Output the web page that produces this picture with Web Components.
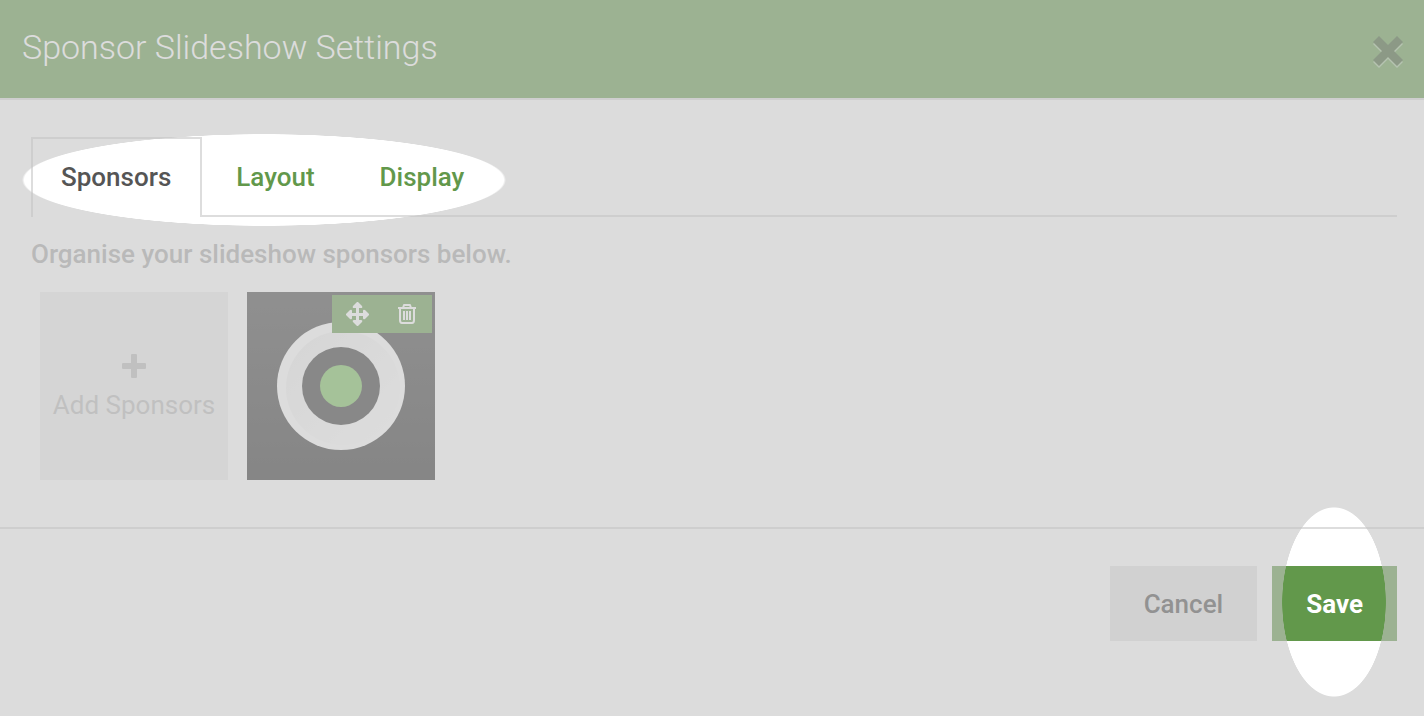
<!DOCTYPE html>
<html lang="en">
<head>
<meta charset="utf-8">
<meta name="viewport" content="width=device-width, initial-scale=1">
<title>Sponsor Slideshow Settings</title>
<style>
    :root {
        --green: #62984b;
        --line: #ddd;
    }

    body {
        margin: 0;
        background: #fff;
        color: #555;
        font-family: Roboto, "Liberation Sans", sans-serif;
        font-size: 26px;
        font-weight: 500;
        line-height: 36px;
    }
</style>
</head>
<body>
<settings-dialog heading="Sponsor Slideshow Settings">
    <settings-tabs slot="tabs" labels="Sponsors,Layout,Display"></settings-tabs>
    <p slot="intro">Organise your slideshow sponsors below.</p>
    <add-tile slot="tiles">Add Sponsors</add-tile>
    <sponsor-tile slot="tiles"></sponsor-tile>
    <action-button slot="actions">Cancel</action-button>
    <action-button slot="actions" variant="primary">Save</action-button>
</settings-dialog>
<tour-overlay></tour-overlay>

<script>
// Dialog frame: header, body and footer
class SettingsDialog extends HTMLElement {
    constructor() {
        super();
        this.attachShadow({ mode: 'open' });
    }

    connectedCallback() {
        this.shadowRoot.innerHTML = `
            <style>
                :host {
                    display: block;
                    min-height: 100vh;
                }

                header {
                    display: flex;
                    justify-content: space-between;
                    align-items: center;
                    box-sizing: border-box;
                    height: 100px;
                    padding: 0 19px 0 22px;
                    background: var(--green);
                    border-bottom: 2px solid var(--line);
                }

                h1 {
                    margin: 0;
                    padding-bottom: 4px;
                    color: #fff;
                    font-size: 34px;
                    font-weight: 300;
                    line-height: 44px;
                }

                .close {
                    display: flex;
                    padding: 4px 0 0;
                    border: 0;
                    background: none;
                    cursor: pointer;
                }

                .close svg {
                    width: 34px;
                    height: 34px;
                    overflow: visible;
                }

                .body {
                    padding: 37px 27px 47px 31px;
                }

                ::slotted(p) {
                    margin: 19px 0 20px;
                    color: #aaa;
                }

                .tiles {
                    display: flex;
                    flex-wrap: wrap;
                    gap: 19px;
                    padding-left: 9px;
                }

                footer {
                    display: flex;
                    justify-content: flex-end;
                    gap: 15px;
                    padding: 37px 27px;
                    border-top: 2px solid var(--line);
                }
            </style>

            <header>
                <h1></h1>
                <button class="close" type="button" aria-label="Close">
                    <svg viewBox="0 0 34 34">
                        <path d="M8 3L17 12L26 3L32 9L23 18L32 27L26 33L17 24L8 33L2 27L11 18L2 9Z" transform="translate(0 1)" fill="#fff" opacity=".4"/>
                        <path d="M8 2L17 11L26 2L32 8L23 17L32 26L26 32L17 23L8 32L2 26L11 17L2 8Z" fill="#3b5b2d"/>
                    </svg>
                </button>
            </header>
            <div class="body">
                <slot name="tabs"></slot>
                <slot name="intro"></slot>
                <div class="tiles"><slot name="tiles"></slot></div>
            </div>
            <footer><slot name="actions"></slot></footer>
        `;
        this.shadowRoot.querySelector('h1').textContent = this.getAttribute('heading');
    }
}

// Row of tabs, the first one starts active
class SettingsTabs extends HTMLElement {
    constructor() {
        super();
        this.attachShadow({ mode: 'open' });
        this.active = 0;
    }

    connectedCallback() {
        this.render();
    }

    render() {
        const labels = this.getAttribute('labels').split(',');
        this.shadowRoot.innerHTML = `
            <style>
                :host {
                    display: block;
                }

                nav {
                    display: flex;
                    gap: 4px;
                    box-shadow: inset 0 -2px var(--line);
                }

                a {
                    padding: 20px 29px 21px 28px;
                    border: 2px solid transparent;
                    border-bottom: 0;
                    color: var(--green);
                    line-height: 37px;
                    text-decoration: none;
                }

                a.active {
                    border-color: var(--line);
                    background: #fff;
                    color: #555;
                }
            </style>
            <nav>
                ${labels.map((label, i) => `<a href="#${label.toLowerCase()}" class="${i === this.active ? 'active' : ''}">${label}</a>`).join('')}
            </nav>
        `;

        this.shadowRoot.querySelectorAll('a').forEach((tab, i) => {
            tab.addEventListener('click', (e) => {
                e.preventDefault();
                this.active = i;
                this.render();
            });
        });
    }
}

class AddTile extends HTMLElement {
    constructor() {
        super();
        this.attachShadow({ mode: 'open' });
        this.shadowRoot.innerHTML = `
            <style>
                :host {
                    display: block;
                }

                button {
                    display: flex;
                    flex-direction: column;
                    align-items: center;
                    justify-content: center;
                    gap: 8px;
                    width: 188px;
                    height: 188px;
                    padding: 4px 0 0;
                    border: 0;
                    background: #eee;
                    color: #bbb;
                    font: inherit;
                    font-weight: 400;
                    white-space: nowrap;
                    cursor: pointer;
                }

                svg {
                    width: 26px;
                    height: 26px;
                }
            </style>
            <button type="button">
                <svg viewBox="0 0 26 26" fill="currentColor"><path d="M11 1h4q1 0 1 1v8h8q1 0 1 1v4q0 1-1 1h-8v8q0 1-1 1h-4q-1 0-1-1v-8H2q-1 0-1-1v-4q0-1 1-1h8V2q0-1 1-1z"/></svg>
                <span><slot></slot></span>
            </button>
        `;
    }
}

// Sponsor logo with its move / delete toolbar
class SponsorTile extends HTMLElement {
    constructor() {
        super();
        this.attachShadow({ mode: 'open' });
        this.shadowRoot.innerHTML = `
            <style>
                :host {
                    display: block;
                    position: relative;
                    width: 188px;
                    height: 188px;
                }

                .logo {
                    display: block;
                    width: 100%;
                    height: 100%;
                }

                .tools {
                    display: flex;
                    position: absolute;
                    top: 3px;
                    right: 3px;
                    background: var(--green);
                }

                button {
                    display: flex;
                    align-items: center;
                    justify-content: center;
                    width: 50px;
                    height: 38px;
                    padding: 0;
                    border: 0;
                    background: none;
                    color: #fff;
                    cursor: pointer;
                }

                button svg {
                    width: 24px;
                    height: 24px;
                }
            </style>
            <svg class="logo" viewBox="0 0 188 188" role="img" aria-label="Sponsor logo">
                <defs>
                    <linearGradient id="bg" x1="0" y1="0" x2="0" y2="1">
                        <stop offset="0" stop-color="#444"/>
                        <stop offset="1" stop-color="#2c2c2c"/>
                    </linearGradient>
                    <linearGradient id="ring" x1="0" y1="0" x2="1" y2="1">
                        <stop offset="0" stop-color="#eee"/>
                        <stop offset=".7" stop-color="#fcfcfc"/>
                        <stop offset="1" stop-color="#fff"/>
                    </linearGradient>
                </defs>
                <rect width="188" height="188" fill="url(#bg)"/>
                <circle cx="94" cy="94" r="64" fill="#fff"/>
                <circle cx="96" cy="96" r="57" fill="url(#ring)"/>
                <circle cx="94" cy="94" r="39" fill="#333"/>
                <circle cx="94" cy="94" r="21" fill="#78bf5b"/>
            </svg>
            <div class="tools">
                <button type="button" aria-label="Move">
                    <svg viewBox="0 0 24 24" fill="currentColor"><path d="M12 0h1L17 4Q18 6 16 6H14V11H18V9Q18 7 20 8L24 12V13L20 17Q18 18 18 16V14H14V18H16Q18 18 17 20L13 24H12L8 20Q7 18 9 18H11V14H7V16Q7 18 5 17L1 13V12L5 8Q7 7 7 9V11H11V6H9Q7 6 8 4z"/></svg>
                </button>
                <button type="button" aria-label="Delete">
                    <svg viewBox="0 0 24 24" fill="none" stroke="currentColor" stroke-width="2">
                        <path d="M3 6h18M5 6v12q0 3 2 3h10q2 0 2-3V6M8 6l1-3h6l1 3" stroke-linejoin="round"/>
                        <path d="M9 9v9M12 9v9M15 9v9"/>
                    </svg>
                </button>
            </div>
        `;
    }
}

class ActionButton extends HTMLElement {
    constructor() {
        super();
        this.attachShadow({ mode: 'open' });
        this.shadowRoot.innerHTML = `
            <style>
                :host {
                    display: block;
                }

                button {
                    height: 75px;
                    padding: 0 34px;
                    border: 0;
                    background: #e4e4e4;
                    color: #4a4a4a;
                    font: inherit;
                    cursor: pointer;
                }

                :host([variant="primary"]) button {
                    background: var(--green);
                    color: #fff;
                    font-weight: 700;
                }
            </style>
            <button type="button"><slot></slot></button>
        `;
    }
}

// Grey veil over the page with a spotlight on the tabs and one on Save
class TourOverlay extends HTMLElement {
    constructor() {
        super();
        this.attachShadow({ mode: 'open' });
        this.shadowRoot.innerHTML = `
            <style>
                :host {
                    display: block;
                    position: absolute;
                    inset: 0;
                    background: rgba(196, 196, 196, 0.592);
                    pointer-events: none;
                    mask-image:
                        radial-gradient(242px 46px at 264px 180px, transparent 99%, #000 100%),
                        radial-gradient(52px 95px at calc(100% - 90px) 602px, transparent 99%, #000 100%);
                    mask-composite: intersect;
                }
            </style>
        `;
    }
}

customElements.define('settings-dialog', SettingsDialog);
customElements.define('settings-tabs', SettingsTabs);
customElements.define('add-tile', AddTile);
customElements.define('sponsor-tile', SponsorTile);
customElements.define('action-button', ActionButton);
customElements.define('tour-overlay', TourOverlay);
</script>
</body>
</html>
